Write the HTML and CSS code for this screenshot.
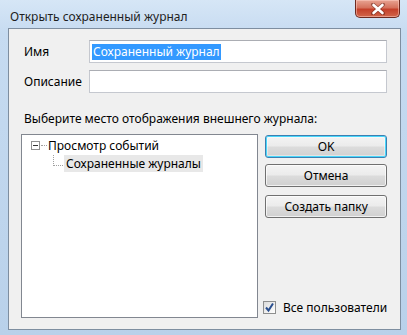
FILE: index.html
```html
<!DOCTYPE html>
<html lang="ru">
<head>
<meta charset="utf-8">
<link rel="stylesheet" href="styles.css">
</head>
<body>
<div class="window">
  <div class="titlebar">
    <span class="title">Открыть сохраненный журнал</span>
    <div class="close">
      <svg width="16" height="12" viewBox="0 0 16 12"><path d="M3 1.5 L13 10.5 M13 1.5 L3 10.5" stroke="#5a1e14" stroke-width="4" stroke-linecap="round" opacity="0.5"/><path d="M3.5 2 L12.5 10 M12.5 2 L3.5 10" stroke="#fff" stroke-width="2.6" stroke-linecap="round"/></svg>
    </div>
  </div>
  <div class="client">
    <div class="field">
      <label class="lbl">Имя</label>
      <div class="input"><span class="sel">Сохраненный журнал</span></div>
    </div>
    <div class="field">
      <label class="lbl">Описание</label>
      <div class="input"></div>
    </div>
    <div class="prompt">Выберите место отображения внешнего журнала:</div>
    <div class="lower">
      <div class="tree">
        <div class="node root">
          <span class="exp"></span><span class="hline"></span><span class="ntext">Просмотр событий</span>
        </div>
        <div class="node child">
          <span class="vline"></span><span class="hline2"></span><span class="ntext selected">Сохраненные журналы</span>
        </div>
      </div>
      <div class="side">
        <div class="btn default">OK</div>
        <div class="btn">Отмена</div>
        <div class="btn b3">Создать папку</div>
        <div class="spacer"></div>
        <div class="check">
          <span class="box">
            <svg width="11" height="11" viewBox="0 0 11 11"><path d="M2 5.5 L4.5 8.5 L9 1.5" fill="none" stroke="#2a4f8f" stroke-width="2"/></svg>
          </span>
          <span class="ctext">Все пользователи</span>
        </div>
      </div>
    </div>
  </div>
</div>
</body>
</html>
```
FILE: styles.css
```css
* { box-sizing: border-box; }
html, body { margin: 0; padding: 0; }
body {
  width: 407px; height: 335px; overflow: hidden;
  font-family: "Noto Sans", "Open Sans", sans-serif;
  font-size: 12px; color: #000;
}
.window {
  width: 407px; height: 335px;
  background: linear-gradient(180deg, #d6e6f6 0%, #c6dbf1 10%, #b9d1ea 100%);
  display: flex; flex-direction: column;
  padding: 0 6px 5px 8px;
}
.titlebar {
  height: 28px; display: flex; align-items: flex-start; position: relative;
}
.title {
  margin-top: 8px; margin-left: 2px; font-size: 12px; color: #1e1e1e;
}
.close {
  position: absolute; right: 1px; top: 0;
  width: 45px; height: 18px;
  border: 1px solid #6d2a20; border-top: none;
  border-radius: 0 0 5px 5px;
  background: linear-gradient(180deg, #e8a493 0%, #d5725d 45%, #c4402a 55%, #d2664a 100%);
  box-shadow: inset 0 0 0 1px rgba(255,210,200,0.5);
  display: flex; align-items: center; justify-content: center;
}
.client {
  flex: 1;
  background: #f0f0f0;
  border: 1px solid #7e8ea0;
  padding: 11px 13px 11px 12px;
  display: flex; flex-direction: column;
}
.field { display: flex; align-items: center; margin-bottom: 7px; }
.lbl { width: 68px; padding-left: 3px; }
.input {
  flex: 1; height: 23px;
  background: #fff;
  border: 1px solid #c5c8cf; border-top-color: #abadb3;
  padding: 2px 2px;
  display: flex; align-items: center;
}
.sel { background: #3399ff; color: #fff; line-height: 16px; padding: 0 1px; }
.prompt { margin-top: 11px; padding-left: 3px; line-height: 16px; white-space: nowrap; }
.lower { display: flex; flex: 1; margin-top: 7px; gap: 7px; }
.tree {
  width: 237px; flex: none; background: #fff;
  border: 1px solid #828790;
  padding: 1px 0 0 9px;
}
.node { display: flex; align-items: center; position: relative; }
.root { height: 18px; }
.exp {
  width: 9px; height: 9px; border: 1px solid #919191; background: #fff; position: relative; flex: none;
}
.exp::after { content: ""; position: absolute; left: 1px; top: 3px; width: 5px; height: 1px; background: #333; }
.hline { width: 6px; border-top: 1px dotted #a0a0a0; margin-left: 1px; flex: none; }
.ntext { padding: 0 2px 0 1px; line-height: 17px; white-space: nowrap; }
.child { height: 18px; padding-left: 33px; align-items: flex-start; padding-top: 1px; }
.vline { position: absolute; left: 22px; top: 1px; height: 11px; border-left: 1px dotted #a0a0a0; }
.hline2 { position: absolute; left: 22px; top: 11px; width: 10px; border-top: 1px dotted #a0a0a0; }
.selected { background: #e8e8e8; padding-left: 2px; }
.side { flex: 1; display: flex; flex-direction: column; padding-top: 1px; }
.btn {
  height: 23px; margin-bottom: 6px;
  border: 1px solid #707070; border-radius: 3px;
  background: linear-gradient(180deg, #f4f4f4 0%, #ebebeb 48%, #dcdcdc 52%, #d0d0d0 100%);
  box-shadow: inset 0 0 0 1px rgba(255,255,255,0.7);
  display: flex; align-items: center; justify-content: center;
}
.btn.default {
  border-color: #3c7fb1;
  box-shadow: inset 0 0 0 1px #48d7fb, inset 0 0 0 2px rgba(255,255,255,0.4);
}
.b3 { margin-top: 2px; }
.spacer { flex: 1; }
.check { display: flex; align-items: center; margin-left: -2px; margin-bottom: 2px; white-space: nowrap; }
.box {
  width: 13px; height: 13px; flex: none; border: 1px solid #8e8f8f; background: linear-gradient(135deg, #dcdcdc, #fff);
  display: flex; align-items: center; justify-content: center; padding: 0;
}
.ctext { margin-left: 7px; }
```
